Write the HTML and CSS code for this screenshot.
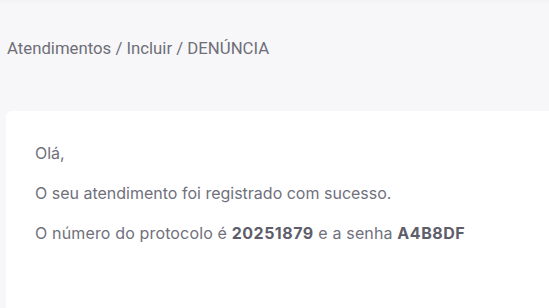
FILE: index.html
```html
<!DOCTYPE html>
<html lang="pt-BR">
<head>
<meta charset="utf-8">
<link rel="stylesheet" href="styles.css">
</head>
<body>
<div class="page">
  <div class="topshade"></div>
  <nav class="breadcrumb">Atendimentos / Incluir / DENÚNCIA</nav>
  <section class="card">
    <p>Olá,</p>
    <p>O seu atendimento foi registrado com sucesso.</p>
    <p class="protocol">O número do protocolo é <strong>20251879</strong> e a senha <strong>A4B8DF</strong></p>
  </section>
</div>
</body>
</html>
```

FILE: styles.css
```css
html, body {
  margin: 0;
  padding: 0;
  background: #f7f7f9;
  height: 100%;
  overflow: hidden;
}
.page {
  display: flex;
  flex-direction: column;
  height: 100%;
}
.topshade {
  height: 4px;
  background: linear-gradient(#f2f2f4, #f7f7f9);
}
.breadcrumb {
  font-family: Roboto, "Liberation Sans", sans-serif;
  font-size: 16.75px;
  line-height: 20px;
  color: #6e6e78;
  padding: 34px 0 0 7px;
  height: 73px;
  box-sizing: border-box;
}
.card {
  background: #ffffff;
  margin-left: 6px;
  margin-top: 34px;
  flex: 1;
  border-radius: 6px 0 0 0;
  padding: 30px 0 0 29px;
  font-family: Inter, "Noto Sans", sans-serif;
  font-size: 16px;
  color: #70707c;
}
.card p {
  margin: 0 0 16px;
  line-height: 24px;
}
.card .protocol {
  letter-spacing: 0.15px;
}
.card strong {
  font-weight: 700;
  color: #5e5e6a;
  letter-spacing: 0.5px;
}
```
